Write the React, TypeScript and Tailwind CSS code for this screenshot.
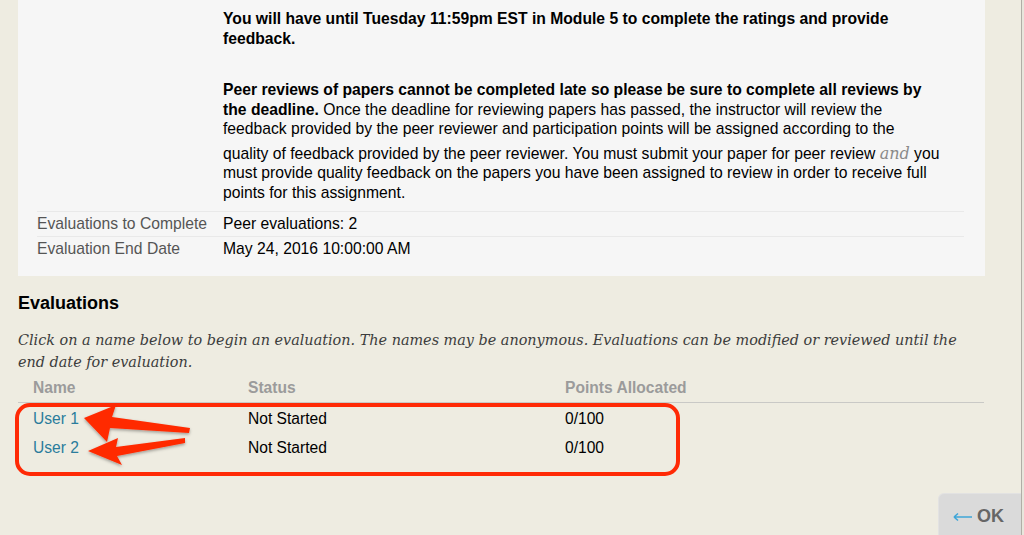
import React from 'react';

const sans = { fontFamily: '"Liberation Sans", Arial, Helvetica, sans-serif' };
const serif = { fontFamily: '"DejaVu Serif", Georgia, serif' };

const rules = [
  { label: 'Evaluations to Complete', value: 'Peer evaluations: 2' },
  { label: 'Evaluation End Date', value: 'May 24, 2016 10:00:00 AM' },
];

const evaluations = [
  { name: 'User 1', status: 'Not Started', points: '0/100' },
  { name: 'User 2', status: 'Not Started', points: '0/100' },
];

function Annotations() {
  // the red box + two arrows drawn over the table
  return (
    <svg className="pointer-events-none absolute inset-0" width={1024} height={535}>
      <defs>
        <filter id="sh" x="-20%" y="-40%" width="140%" height="180%">
          <feDropShadow dx="0" dy="1.5" stdDeviation="1.5" floodColor="#000" floodOpacity="0.35" />
        </filter>
      </defs>
      <rect x={17} y={405} width={661} height={69} rx={13} fill="none" stroke="#ff2a06" strokeWidth={4} />
      <g fill="#ff2a06" filter="url(#sh)">
        <polygon points="84,418 116,405 112,417 190,428 189,433 110,428 107,442" />
        <polygon points="88,451 118,438 116,447 185,438 185,443 117,456 122,465" />
      </g>
    </svg>
  );
}

function BackArrow() {
  return (
    <svg width={19} height={10} viewBox="0 0 19 10" className="shrink-0">
      <path d="M1 5 H19 M1 5 L5 1.5 M1 5 L5 8.5" stroke="#3fa6d8" strokeWidth={1.6} fill="none" />
    </svg>
  );
}

export default function App() {
  return (
    <div className="relative flex h-[535px] w-[1024px] overflow-hidden bg-[#eeece1]" style={sans}>
      <div className="flex flex-1 flex-col">
        {/* Details panel */}
        <div className="ml-[18px] w-[967px] bg-[#f6f6f6] pl-[19px] pr-[21px] pt-[9px] pb-[15px] text-[15.7px] text-black">
          <div className="pl-[186px]">
            <div className="font-bold leading-[20px]">
              <div>You will have until Tuesday 11:59pm EST in Module 5 to complete the ratings and provide</div>
              <div>feedback.</div>
            </div>
            <div className="mt-[31px] leading-[19.5px]">
              <div><b>Peer reviews of papers cannot be completed late so please be sure to complete all reviews by</b></div>
              <div><b>the deadline.</b> Once the deadline for reviewing papers has passed, the instructor will review the</div>
              <div>feedback provided by the peer reviewer and participation points will be assigned according to the</div>
              <div className="mt-[5px]">
                quality of feedback provided by the peer reviewer. You must submit your paper for peer review{' '}
                <i className="text-[16px] text-[#8a8a8a]" style={serif}>and</i> you
              </div>
              <div>must provide quality feedback on the papers you have been assigned to review in order to receive full</div>
              <div>points for this assignment.</div>
            </div>
          </div>
          <div className="mt-[9px]">
            {rules.map(r => (
              <div key={r.label} className="grid h-[25px] grid-cols-[186px_1fr] items-center border-t border-[#e9e9e9]">
                <span className="text-[#555]">{r.label}</span>
                <span>{r.value}</span>
              </div>
            ))}
          </div>
        </div>

        {/* Evaluations */}
        <div className="ml-[18px]">
          <h2 className="mt-[15px] text-[18px] font-bold leading-[24px] text-black">Evaluations</h2>
          <p className="mt-[14px] text-[14.4px] italic leading-[22px] text-[#3c3c3c]" style={serif}>
            Click on a name below to begin an evaluation. The names may be anonymous. Evaluations can be modified or reviewed until the
            <br />
            end date for evaluation.
          </p>
          <div className="w-[966px] text-[15.6px]">
            <div className="grid h-[30px] grid-cols-[215px_317px_1fr] items-center border-b border-[#c9c9c6] pl-[15px] pt-[1px] font-bold text-[#9b9b9b]">
              <span>Name</span>
              <span>Status</span>
              <span>Points Allocated</span>
            </div>
            {evaluations.map(e => (
              <div key={e.name} className="grid h-[29px] grid-cols-[215px_317px_1fr] pl-[15px] pt-[6px] leading-[20px] text-black">
                <a href="#" className="text-[#2a7c9c]">{e.name}</a>
                <span>{e.status}</span>
                <span>{e.points}</span>
              </div>
            ))}
          </div>
        </div>

        <div className="mt-auto flex justify-end">
          <button className="flex h-[42px] w-[83px] items-center gap-[5px] rounded-tl-[6px] border-l border-t border-[#e2e2e2] bg-[#dadada] pl-[14px] pt-[4px] text-[18px] font-bold text-[#666]">
            <BackArrow />
            <span>OK</span>
          </button>
        </div>
      </div>
      <div className="w-px bg-[#b0aea6]" />
      <div className="w-[2px] bg-[#e8e6dc]" />
      <Annotations />
    </div>
  );
}
